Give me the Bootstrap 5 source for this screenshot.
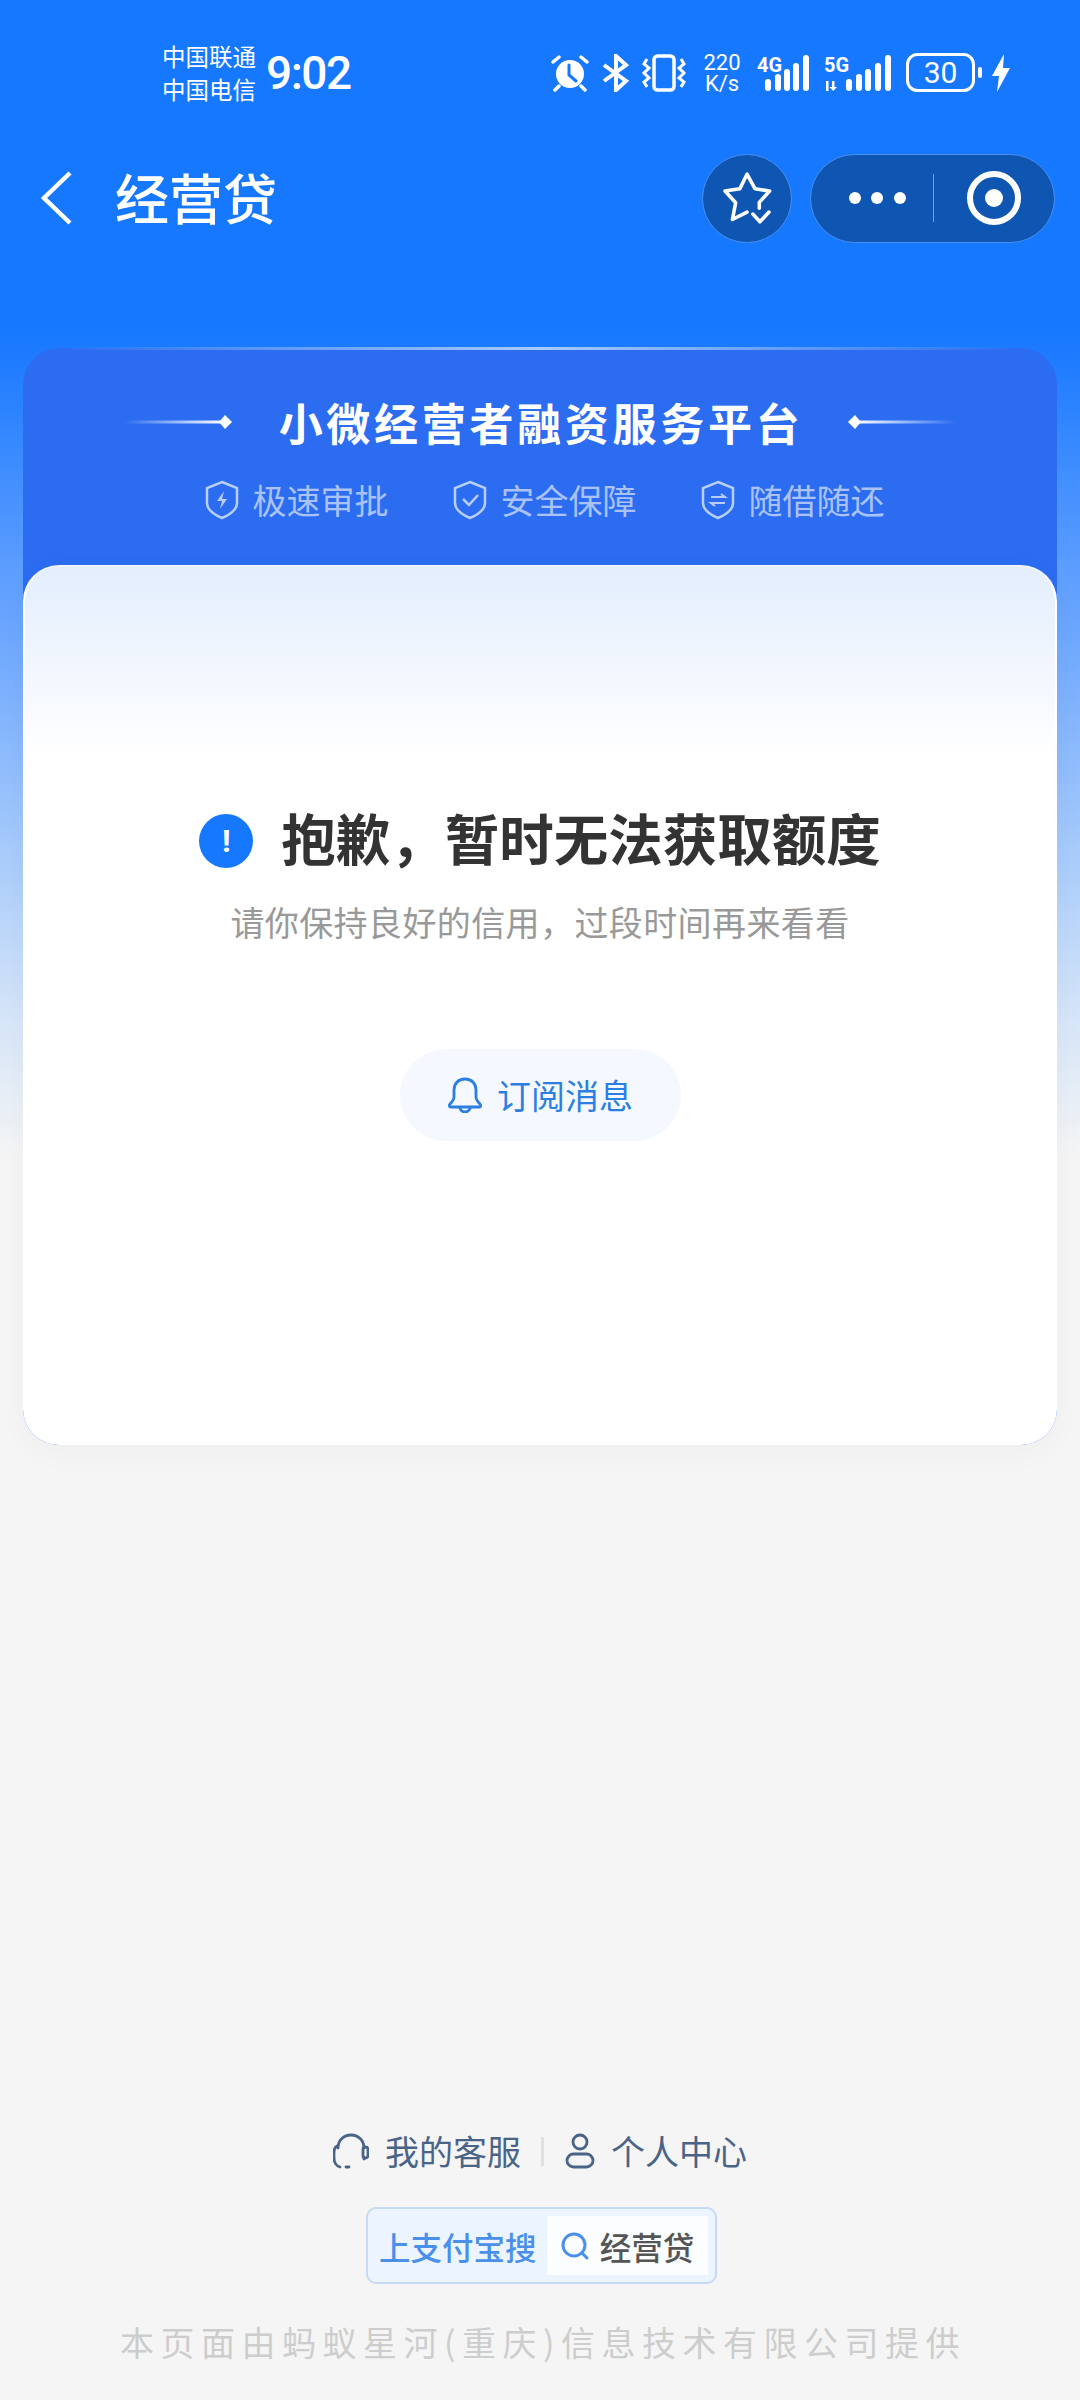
<!DOCTYPE html>
<html lang="zh-CN">
<head>
<meta charset="UTF-8" />
<meta name="viewport" content="width=device-width, initial-scale=1.0" />
<title>经营贷</title>
<link rel="stylesheet" href="https://cdn.jsdelivr.net/npm/bootstrap@5.3.0/dist/css/bootstrap.min.css" />
<style>
    html, body { margin: 0; background: #f5f5f5; }
    .screen {
        width: 1080px;
        min-height: 2400px;
        font-family: "Noto Sans CJK SC", "Noto Sans", sans-serif;
        background: linear-gradient(180deg, #1677ff 0, #1677ff 330px, #5c9dff 570px, #a9ccfb 860px, #d6e5f8 1020px, #f5f5f5 1160px, #f5f5f5 100%);
    }
    .statusbar { height: 146px; padding: 0 70px 0 162px; color: #fff; }
    .carrier { width: 96px; font-size: 23.500px; line-height: 33px; white-space: nowrap; }
    .clock { font-family: Roboto, sans-serif; font-size: 46px; font-weight: 500; line-height: 1; margin-left: 8px; letter-spacing: -1.500px; }
    .st-icons svg { display: block; flex: none; }
    .speed { font-family: Roboto, sans-serif; font-size: 22px; line-height: 21px; text-align: center; width: 42px; margin-left: 14px; margin-right: 14px; }
    .appbar { height: 104px; padding: 0 25px 0 40px; color: #fff; }
    .app-title { font-size: 54px; line-height: 60px; margin-left: 43px; font-weight: 500; margin-top: -2px; }
    .round-btn {
        height: 89px;
        background: #0f56b3;
        border: 1px solid #4a8ff0;
        border-radius: 45px;
    }
    .star-btn { width: 90px; margin-right: 18px; }
    .capsule-btn { width: 245px; }
    .capsule-sep { width: 1px; height: 48px; background: rgba(255,255,255,.45); }
    .dots-icon { margin-left: 37px; }
    .panel {
        position: relative;
        margin: 98px 23px 0;
        border-radius: 36px;
        background: radial-gradient(ellipse 720px 260px at 50% 100%, #5290fb 0, #4180f6 50%, #2c6cf0 100%);
    }
    .panel::before {
        content: "";
        position: absolute;
        top: -1px;
        left: 40px;
        right: 40px;
        height: 3px;
        background: linear-gradient(90deg, rgba(255,255,255,0), rgba(190,220,255,.85) 50%, rgba(255,255,255,0));
    }
    .panel-head { height: 217px; padding-top: 44px; color: #fff; }
    .panel-title { font-size: 44px; line-height: 60px; letter-spacing: 3.700px; font-weight: 700; margin: 0 45px 0 47px; white-space: nowrap; }
    .feature-row { margin-top: 26px; padding-left: 9px; gap: 64px; color: rgba(255,255,255,.6); font-size: 34px; line-height: 44px; }
    .feature-row svg { margin-right: 14px; }
    .sheet {
        height: 880px;
        padding-top: 241px;
        background: linear-gradient(180deg, #e3eefd 0, #f3f7fe 110px, #fff 190px);
        border: 2px solid #fff;
        border-top-color: #eef4fe;
        border-radius: 36px;
        box-shadow: 0 8px 30px rgba(0,0,0,.03);
    }
    .sorry { font-size: 54.500px; line-height: 64px; font-weight: 700; color: #333; margin-top: -3px; }
    .sorry-dot {
        width: 54px;
        height: 54px;
        margin-top: 8px;
        margin-right: 28px;
        border-radius: 50%;
        background: #1677ff;
        color: #fff;
        font-size: 32px;
        line-height: 54px;
        font-family: Roboto, sans-serif;
    }
    .sorry-sub { margin-top: 29px; font-size: 34px; line-height: 48px; color: #999; letter-spacing: .4px; }
    .sub-btn {
        margin-top: 103px;
        width: 281px;
        height: 92px;
        border-radius: 46px;
        background: #f5f9ff;
        border: 0;
        color: #2b7fe3;
        font-size: 34px;
        line-height: 48px;
    }
    .sub-btn svg { margin-right: 14px; }
    .foot { margin-top: auto; padding-bottom: 34px; }
    .foot-links { color: #4a6488; font-size: 34px; line-height: 48px; }
    .foot-sep { width: 3px; height: 29px; background: #dde0e4; margin: 0 21px 0 20px; }
    .search-tag {
        margin-top: 32px;
        margin-left: 3px;
        width: 351px;
        height: 77px;
        padding: 8px 7px 8px 11px;
        background: #ecf4ff;
        border: 2px solid #c6daf5;
        border-radius: 10px;
    }
    .search-tag-label { font-size: 31.500px; line-height: 44px; color: #4a90ea; font-weight: 500; white-space: nowrap; }
    .search-tag-box { margin-left: auto; width: 161px; height: 59px; background: #fbfdff; color: #555; font-size: 31.500px; line-height: 44px; font-weight: 500; }
    .search-tag-box svg { margin-right: 11px; }
    .provider { margin-top: 34px; padding-left: 6px; font-size: 34px; line-height: 48px; color: #cdcdcd; letter-spacing: 6.500px; white-space: nowrap; }
</style>
</head>
<body>
<div class="screen d-flex flex-column">

    <!-- status bar -->
    <div class="statusbar d-flex align-items-center">
        <div class="carrier">中国联通<br>中国电信</div>
        <div class="clock">9:02</div>
        <div class="st-icons d-flex align-items-center ms-auto">
            <svg width="38" height="38" viewBox="0 0 38 38" fill="none" stroke="#fff" stroke-linecap="round">
                <circle cx="19" cy="20" r="14" fill="#fff" stroke="none"/>
                <path d="M18 11v10l7 6" stroke="#1677ff" stroke-width="3"/>
                <path d="M2 8l6-5M36 8l-6-5M8 32l-4 4M30 32l4 4" stroke-width="3.500"/>
            </svg>
            <svg style="margin-left:12px" width="30" height="38" viewBox="0 0 30 38" fill="none" stroke="#fff" stroke-width="4">
                <path d="M3 11l22 16-10 9V2l10 9L3 27"/>
            </svg>
            <svg style="margin-left:10px" width="46" height="38" viewBox="0 0 46 38" fill="none" stroke="#fff" stroke-width="3">
                <rect x="13" y="2" width="20" height="34" rx="3.500" stroke-width="3.500"/>
                <path d="M6 5l-3 5 5 4-5 5 5 5-5 4 3 5M40 5l3 5-5 4 5 5-5 5 5 4-3 5"/>
            </svg>
            <div class="speed">220<br>K/s</div>
            <svg width="52" height="38" viewBox="0 0 52 38" fill="#fff">
                <text x="0" y="18" font-family="Roboto, sans-serif" font-weight="700" font-size="20">4G</text>
                <rect x="8" y="25" width="6" height="12" rx="3"/><rect x="18" y="20" width="6" height="17" rx="3"/>
                <rect x="27" y="15" width="6" height="22" rx="3"/><rect x="36" y="9" width="6" height="28" rx="3"/>
                <rect x="46" y="1" width="6" height="36" rx="3"/>
            </svg>
            <svg style="margin-left:15px" width="67" height="38" viewBox="0 0 67 38" fill="#fff">
                <text x="0" y="18" font-family="Roboto, sans-serif" font-weight="700" font-size="20">5G</text>
                <rect x="2" y="27" width="2.500" height="10"/><path d="M8 27h2.500v6h2.500l-3.700 4-3.800-4h2.500z"/>
                <rect x="22" y="25" width="6" height="12" rx="3"/><rect x="32" y="20" width="6" height="17" rx="3"/>
                <rect x="41" y="15" width="6" height="22" rx="3"/><rect x="51" y="9" width="6" height="28" rx="3"/>
                <rect x="61" y="1" width="6" height="36" rx="3"/>
            </svg>
            <svg style="margin-left:15px" width="76" height="40" viewBox="0 0 76 40" fill="#fff">
                <rect x="1.500" y="1.500" width="66" height="36" rx="10" fill="none" stroke="#fff" stroke-width="3"/>
                <text x="34.500" y="30" text-anchor="middle" font-family="Roboto, sans-serif" font-size="30">30</text>
                <rect x="72" y="14" width="4" height="11" rx="2"/>
            </svg>
            <svg style="margin-left:10px" width="18" height="38" viewBox="0 0 18 38" fill="#fff">
                <path d="M12 0L0 22h7l-2 16 13-24h-7z"/>
            </svg>
        </div>
    </div>

    <!-- app bar -->
    <div class="appbar d-flex align-items-center">
        <svg width="32" height="54" viewBox="0 0 32 54" fill="none" stroke="#fff" stroke-width="4.500">
            <path d="M30 2L4 27l26 25"/>
        </svg>
        <div class="app-title">经营贷</div>
        <div class="ms-auto d-flex">
            <div class="round-btn star-btn d-flex align-items-center justify-content-center">
                <svg width="52" height="55" viewBox="120 95 160 170" fill="none" stroke="#fff" stroke-width="11" stroke-linecap="round" stroke-linejoin="round">
                    <path d="M238 210V192l32-35-45-7-25-45-22 45-46 7 33 36-10 52 45-23"/>
                    <path d="M218 228l22 24 28-30"/>
                </svg>
            </div>
            <div class="round-btn capsule-btn d-flex align-items-center">
                <svg class="dots-icon flex-shrink-0" width="60" height="14" viewBox="0 0 60 14" fill="#fff">
                    <circle cx="7" cy="7" r="6"/><circle cx="29" cy="7" r="6"/><circle cx="52" cy="7" r="6"/>
                </svg>
                <div class="capsule-sep" style="margin-left:25px"></div>
                <svg style="margin-left:33px" width="54" height="54" viewBox="0 0 54 54" fill="none" stroke="#fff">
                    <circle cx="27" cy="27" r="24" stroke-width="6"/>
                    <circle cx="27" cy="27" r="9" fill="#fff" stroke="none"/>
                </svg>
            </div>
        </div>
    </div>

    <!-- main panel -->
    <div class="panel">
        <div class="panel-head">
            <div class="d-flex align-items-center justify-content-center">
                <svg width="108" height="14" viewBox="0 0 108 14">
                    <defs><linearGradient id="lineL"><stop offset="0" stop-color="#fff" stop-opacity="0"/><stop offset="1" stop-color="#fff"/></linearGradient></defs>
                    <rect x="0" y="5.500" width="100" height="3" fill="url(#lineL)"/>
                    <path d="M101 0l7 7-7 7-6-7z" fill="#fff"/>
                </svg>
                <div class="panel-title">小微经营者融资服务平台</div>
                <svg width="108" height="14" viewBox="0 0 108 14">
                    <defs><linearGradient id="lineR"><stop offset="0" stop-color="#fff"/><stop offset="1" stop-color="#fff" stop-opacity="0"/></linearGradient></defs>
                    <rect x="8" y="5.500" width="100" height="3" fill="url(#lineR)"/>
                    <path d="M7 0l6 7-6 7-7-7z" fill="#fff"/>
                </svg>
            </div>
            <div class="feature-row d-flex justify-content-center">
                <div class="d-flex align-items-center">
                    <svg width="34" height="40" viewBox="0 0 34 40" fill="none" stroke="#b7cff8" stroke-width="2.500">
                        <path d="M17 2l15 6v15c0 7-8 12-15 15C10 35 2 30 2 23V8z"/>
                        <path d="M19 11l-7 10h5l-2 8 7-10h-5z" fill="#b7cff8" stroke="none"/>
                    </svg>
                    <span>极速审批</span>
                </div>
                <div class="d-flex align-items-center">
                    <svg width="34" height="40" viewBox="0 0 34 40" fill="none" stroke="#b7cff8" stroke-width="2.500">
                        <path d="M17 2l15 6v15c0 7-8 12-15 15C10 35 2 30 2 23V8z"/>
                        <path d="M10 19l6 6 9-10"/>
                    </svg>
                    <span>安全保障</span>
                </div>
                <div class="d-flex align-items-center">
                    <svg width="34" height="40" viewBox="0 0 34 40" fill="none" stroke="#b7cff8" stroke-width="2.500">
                        <path d="M17 2l15 6v15c0 7-8 12-15 15C10 35 2 30 2 23V8z"/>
                        <path d="M10 17h14l-4-3M24 23H10l4 3" stroke-width="2"/>
                    </svg>
                    <span>随借随还</span>
                </div>
            </div>
        </div>

        <div class="sheet d-flex flex-column align-items-center">
            <div class="sorry d-flex align-items-center">
                <div class="sorry-dot text-center flex-shrink-0">!</div>
                <span>抱歉，暂时无法获取额度</span>
            </div>
            <div class="sorry-sub">请你保持良好的信用，过段时间再来看看</div>
            <button type="button" class="btn sub-btn d-flex align-items-center justify-content-center p-0">
                <svg width="36" height="36" viewBox="0 0 36 36" fill="none" stroke="#2b7fe3" stroke-width="2.800" stroke-linejoin="round">
                    <path d="M18 2c-7 0-11 5-11 11v7c0 3-2 5-4 7-1 1-1 3 1 3h28c2 0 2-2 1-3-2-2-4-4-4-7v-7c0-6-4-11-11-11z"/>
                    <path d="M13 30c0 3 2 5 5 5s5-2 5-5"/>
                </svg>
                <span>订阅消息</span>
            </button>
        </div>
    </div>

    <!-- footer -->
    <div class="foot d-flex flex-column align-items-center">
        <div class="foot-links d-flex align-items-center">
            <svg class="me-3" width="36" height="36" viewBox="0 0 36 36" fill="none" stroke="#4a6488" stroke-width="2.800" stroke-linecap="round">
                <path d="M5 15C5 7 11 2 18 2s13 5 13 13"/>
                <rect x="30" y="14" width="5" height="11" rx="2.500"/>
                <path d="M4 13c-2 1-3 3-3 6v6c0 4 2 8 6 9"/>
                <path d="M13 34h3"/>
                <path d="M31 25v1"/>
            </svg>
            <span>我的客服</span>
            <div class="foot-sep"></div>
            <svg class="me-3" width="30" height="36" viewBox="0 0 30 36" fill="none" stroke="#4a6488" stroke-width="2.800">
                <circle cx="15" cy="9" r="7"/>
                <rect x="2" y="21" width="26" height="13" rx="6.500"/>
            </svg>
            <span>个人中心</span>
        </div>
        <div class="search-tag d-flex align-items-center">
            <span class="search-tag-label">上支付宝搜</span>
            <div class="search-tag-box d-flex align-items-center justify-content-center">
                <svg width="28" height="28" viewBox="0 0 28 28" fill="none" stroke="#4a90ea" stroke-width="3" stroke-linecap="round">
                    <circle cx="13" cy="13" r="11"/>
                    <path d="M21 21l5 5"/>
                </svg>
                <span>经营贷</span>
            </div>
        </div>
        <div class="provider">本页面由蚂蚁星河(重庆)信息技术有限公司提供</div>
    </div>
</div>
<script src="https://cdn.jsdelivr.net/npm/bootstrap@5.3.0/dist/js/bootstrap.bundle.min.js"></script>
</body>
</html>
